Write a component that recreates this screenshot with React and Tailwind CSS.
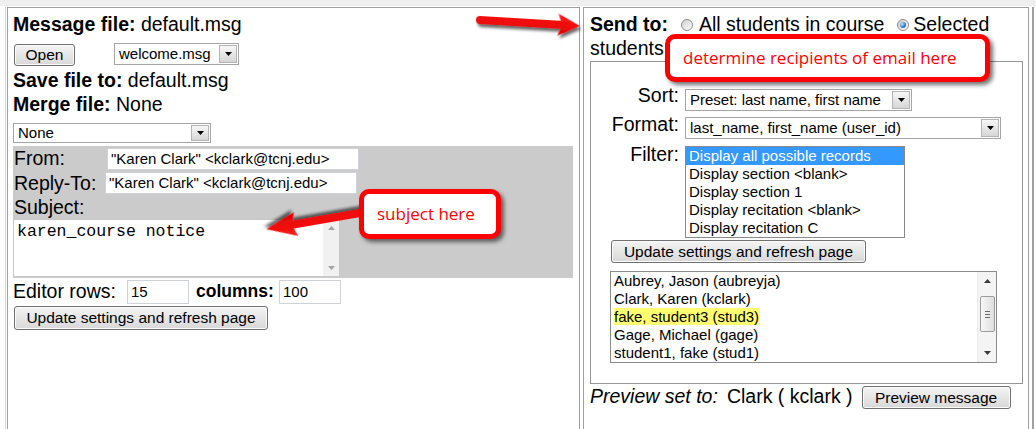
import React from "react";

function Btn({ className = "", children }) {
  return (
    <div
      className={
        "flex items-center justify-center whitespace-nowrap text-[15.5px] leading-none text-black border border-[#707070] rounded-[3px] bg-gradient-to-b from-[#f4f4f4] to-[#d8d8d8] shadow-[inset_0_0_0_1px_#fbfbfb] shrink-0 " +
        className
      }
    >
      {children}
    </div>
  );
}

function Select({ className = "", text }) {
  return (
    <div
      className={
        "relative flex items-center bg-white border border-[#a5a5a5] pl-[4px] text-[15px] text-black shrink-0 " +
        className
      }
    >
      <span className="whitespace-nowrap leading-[18px]">{text}</span>
      <div className="absolute top-[1px] bottom-[1px] right-[1px] w-[18px] border border-[#b4b4b4] bg-gradient-to-b from-[#f7f7f7] to-[#d6d6d6] flex items-center justify-center">
        <svg width="7" height="4" viewBox="0 0 7 4">
          <path d="M0 0H7L3.5 4Z" fill="#000" />
        </svg>
      </div>
    </div>
  );
}

function TextInput({ className = "", value }) {
  return (
    <div
      className={
        "flex items-center bg-white border border-[#cfd2d6] pl-[3px] text-[15px] leading-[18px] text-black whitespace-nowrap overflow-hidden shrink-0 " +
        className
      }
    >
      {value}
    </div>
  );
}

function Radio({ checked, className = "" }) {
  return (
    <span
      className={
        "relative inline-block w-[12px] h-[12px] rounded-full border border-[#8a8a8a] bg-gradient-to-br from-[#cfcfcf] to-[#ffffff] shrink-0 " +
        className
      }
    >
      {checked && (
        <span className="absolute left-[2px] top-[2px] w-[6px] h-[6px] rounded-full bg-[radial-gradient(circle_at_35%_35%,#c6e6ff,#2b74c7_60%,#1a4f8f)]" />
      )}
    </span>
  );
}

function Tri({ up, color }) {
  return (
    <svg width="7" height="4" viewBox="0 0 7 4">
      {up ? <path d="M3.5 0L7 4H0Z" fill={color} /> : <path d="M0 0H7L3.5 4Z" fill={color} />}
    </svg>
  );
}

export default function App() {
  const filters = [
    "Display all possible records",
    "Display section <blank>",
    "Display section 1",
    "Display recitation <blank>",
    "Display recitation C",
  ];
  const students = [
    "Aubrey, Jason (aubreyja)",
    "Clark, Karen (kclark)",
    "fake, student3 (stud3)",
    "Gage, Michael (gage)",
    "student1, fake (stud1)",
  ];

  return (
    <div className="relative w-[1036px] h-[429px] overflow-hidden bg-white text-black font-['Liberation_Sans',Arial,sans-serif]">
      <div className="h-[6px] bg-[#efefef]" />
      <div className="flex pt-[1px] pl-[5px]">
        <div className="w-[1px] h-[440px] bg-[#d4d4d4] mr-[1px] shrink-0" />

        {/* LEFT CELL */}
        <div className="w-[573px] h-[440px] border border-[#a0a0a0] pl-[5px] pt-[4px] shrink-0">
          <div className="h-[24px] leading-[24px] text-[19.5px] whitespace-nowrap">
            <b>Message file:</b> default.msg
          </div>
          <div className="mt-[7px] h-[23px] flex items-start">
            <Btn className="mt-[1px] ml-[1px] w-[61px] h-[22px]">Open</Btn>
            <Select className="ml-[39px] w-[125px] h-[22px]" text="welcome.msg" />
          </div>
          <div className="mt-[2px] h-[24px] leading-[24px] text-[19.5px] whitespace-nowrap">
            <b>Save file to:</b> default.msg
          </div>
          <div className="h-[24px] leading-[24px] text-[19.5px] whitespace-nowrap">
            <b>Merge file:</b> None
          </div>
          <Select className="mt-[7px] w-[198px] h-[20px]" text="None" />

          {/* grey table */}
          <div className="mt-[3px] w-[560px] bg-[#cbcbcb] pb-[1px]">
            <div className="h-[25px] flex items-start">
              <div className="w-[94px] leading-[25px] text-[19.5px] pl-[1px]">From:</div>
              <TextInput className="mt-[2px] w-[252px] h-[22px]" value={'"Karen Clark" <kclark@tcnj.edu>'} />
            </div>
            <div className="h-[25px] flex items-start">
              <div className="w-[92px] leading-[25px] text-[19.5px] pl-[1px]">Reply-To:</div>
              <TextInput className="mt-[1px] w-[252px] h-[22px]" value={'"Karen Clark" <kclark@tcnj.edu>'} />
            </div>
            <div className="h-[23px] leading-[23px] text-[19.5px] pl-[1px]">Subject:</div>
            <div className="relative w-[327px] h-[58px] bg-white border border-[#c9c9c9]">
              <div className="pl-[3px] pt-[2px] leading-[19px] text-[16.5px] font-['Liberation_Mono','Courier_New',monospace] whitespace-nowrap">
                karen_course notice
              </div>
              <div className="absolute top-0 bottom-0 right-0 w-[17px] bg-[#f1f1f1] border-l border-[#ffffff] flex flex-col items-center justify-between py-[6px]">
                <Tri up color="#a3a3a3" />
                <Tri color="#a3a3a3" />
              </div>
            </div>
          </div>

          <div className="mt-[1px] h-[25px] flex items-start">
            <div className="w-[114px] leading-[24px] text-[19.5px] whitespace-nowrap">Editor rows:</div>
            <TextInput className="mt-[1px] w-[62px] h-[24px]" value="15" />
            <div className="ml-[7px] w-[83px] leading-[24px] text-[17.5px] font-bold whitespace-nowrap">columns:</div>
            <TextInput className="mt-[1px] w-[62px] h-[24px]" value="100" />
          </div>
          <Btn className="mt-[2px] ml-[1px] w-[254px] h-[24px]">Update settings and refresh page</Btn>
        </div>

        <div className="w-[3px] shrink-0" />

        {/* RIGHT CELL */}
        <div className="w-[446px] h-[440px] border border-[#a0a0a0] pl-[6px] pt-[4px] shrink-0">
          <div className="h-[24px] flex items-start text-[19.5px] leading-[24px] whitespace-nowrap">
            <b>Send to:</b>
            <Radio className="ml-[13px] mt-[7px]" />
            <span className="ml-[6px]">All students in course</span>
            <Radio checked className="ml-[13px] mt-[7px]" />
            <span className="ml-[4px]">Selected</span>
          </div>
          <div className="h-[24px] leading-[24px] text-[19.5px]">students</div>

          <div className="mt-[1px] w-[433px] border border-[#969696] pt-[21px] pb-[20px]">
            <div className="h-[28px] flex items-start">
              <div className="w-[88px] text-right leading-[24px] text-[19.5px]">Sort:</div>
              <Select className="ml-[6px] mt-[6px] w-[227px] h-[22px]" text="Preset: last name, first name" />
            </div>
            <div className="mt-[1px] h-[27px] flex items-start">
              <div className="w-[88px] text-right leading-[24px] text-[19.5px]">Format:</div>
              <Select className="ml-[6px] mt-[5px] w-[316px] h-[22px]" text="last_name, first_name (user_id)" />
            </div>
            <div className="mt-[3px] flex items-start">
              <div className="w-[88px] text-right leading-[24px] text-[19.5px]">Filter:</div>
              <div className="ml-[6px] mt-[4px] w-[220px] h-[92px] bg-white border border-[#8a8a8a] text-[15px] leading-[18px] overflow-hidden">
                {filters.map((f, i) => (
                  <div
                    key={f}
                    className={
                      i === 0
                        ? "h-[18px] pl-[3px] bg-[#3399ff] text-white whitespace-nowrap"
                        : "h-[18px] pl-[3px] whitespace-nowrap"
                    }
                  >
                    {f}
                  </div>
                ))}
              </div>
            </div>
            <Btn className="mt-[2px] ml-[20px] w-[255px] h-[23px]">Update settings and refresh page</Btn>
            <div className="relative mt-[8px] ml-[19px] w-[387px] h-[92px] bg-white border border-[#8a8a8a] text-[15px] leading-[18px]">
              {students.map((s, i) => (
                <div key={s} className="h-[18px] pl-[3px] whitespace-nowrap">
                  {i === 2 ? <span className="bg-[#ffff70] pr-[1px]">{s}</span> : s}
                </div>
              ))}
              <div className="absolute top-0 bottom-0 right-0 w-[19px] bg-[#f4f4f4] border-l border-[#ececec] flex flex-col items-center">
                <div className="h-[18px] flex items-center justify-center">
                  <Tri up color="#3a3a3a" />
                </div>
                <div className="mt-[6px] w-[15px] h-[36px] rounded-[2px] border border-[#9c9c9c] bg-gradient-to-r from-[#f7f7f7] to-[#dedede] flex flex-col items-center justify-center gap-[2px]">
                  <div className="w-[5px] h-[1px] bg-[#6a6a6a]" />
                  <div className="w-[5px] h-[1px] bg-[#6a6a6a]" />
                  <div className="w-[5px] h-[1px] bg-[#6a6a6a]" />
                </div>
                <div className="flex-1" />
                <div className="h-[18px] flex items-center justify-center">
                  <Tri color="#3a3a3a" />
                </div>
              </div>
            </div>
          </div>

          <div className="h-[25px] flex items-start text-[19.5px] leading-[24px] whitespace-nowrap">
            <i>Preview set to:</i>
            <span className="ml-[9px]">Clark ( kclark )</span>
            <Btn className="ml-[9px] mt-[2px] w-[149px] h-[23px]">Preview message</Btn>
          </div>
        </div>

        <div className="w-[3px] shrink-0" />
        <div className="w-[2px] h-[440px] bg-[#a0a0a0] shrink-0" />
      </div>

      {/* annotation arrows */}
      <svg className="absolute left-0 top-0 pointer-events-none" width="1036" height="429" viewBox="0 0 1036 429">
        <defs>
          <filter id="ash" x="-20%" y="-60%" width="140%" height="220%">
            <feDropShadow dx="2" dy="3" stdDeviation="1.6" floodColor="#000" floodOpacity="0.6" />
          </filter>
          <linearGradient id="ared" x1="0" y1="0" x2="0" y2="1">
            <stop offset="0" stopColor="#ff1a1a" />
            <stop offset="1" stopColor="#e00000" />
          </linearGradient>
        </defs>
        <g transform="translate(480,20) rotate(3.4)" filter="url(#ash)">
          <path d="M0,-4 L81,-4 L78,-11 L100,0 L78,11 L81,4 L0,4 A4,4 0 0 1 0,-4 Z" fill="url(#ared)" />
        </g>
        <g transform="translate(366,212) rotate(170.2)" filter="url(#ash)">
          <path d="M0,-4 L74,-4 L71,-12 L101,0 L71,12 L74,4 L0,4 A4,4 0 0 1 0,-4 Z" fill="url(#ared)" />
        </g>
      </svg>

      {/* callouts */}
      <div className="absolute left-[359px] top-[189px] w-[142px] h-[50px] border-[5px] border-[#ff0000] rounded-[10px] bg-white shadow-[3px_3px_4px_rgba(0,0,0,0.55)] flex items-center pl-[13px] text-[17px] text-[#ff0000] font-['Open_Sans','Noto_Sans',sans-serif] whitespace-nowrap">
        subject here
      </div>
      <div className="absolute left-[665px] top-[34px] w-[325px] h-[48px] border-[5px] border-[#ff0000] rounded-[10px] bg-white shadow-[3px_3px_4px_rgba(0,0,0,0.55)] flex items-center pl-[13px] text-[17px] text-[#ff0000] font-['Open_Sans','Noto_Sans',sans-serif] whitespace-nowrap">
        determine recipients of email here
      </div>
    </div>
  );
}
